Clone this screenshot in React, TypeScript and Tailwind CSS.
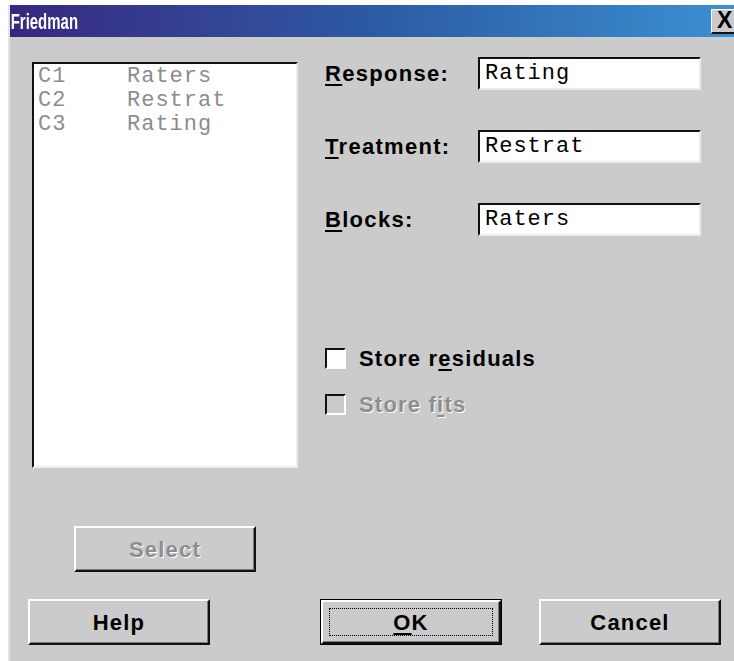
import type { ReactNode } from "react";

const sans = "font-['Liberation_Sans',Arial,sans-serif]";
const mono = "font-['Liberation_Mono','Courier_New',monospace]";

const columns = [
  { id: "C1", name: "Raters" },
  { id: "C2", name: "Restrat" },
  { id: "C3", name: "Rating" },
];

function Underline({ children }: { children: ReactNode }) {
  return <span className="underline underline-offset-[3px] decoration-[2px]">{children}</span>;
}

function Field({ label, value }: { label: ReactNode; value: string }) {
  return (
    <div className="flex items-center h-[33px]">
      <div className={`${sans} w-[153px] text-[22px] font-bold tracking-[1.3px] text-black`}>{label}</div>
      <div className="w-[223px] h-[33px] bg-white border-t-2 border-l-2 border-t-[#111] border-l-[#111] border-r-2 border-b-2 border-r-[#ececec] border-b-[#ececec] flex items-center pl-[5px]">
        <span className={`${mono} text-[22px] tracking-[1px] text-black leading-none`}>{value}</span>
      </div>
    </div>
  );
}

function Check({ label, disabled }: { label: ReactNode; disabled?: boolean }) {
  return (
    <div className="flex items-center h-[21px]">
      <div
        className={`w-[21px] h-[21px] border-t-2 border-l-2 border-t-[#111] border-l-[#111] border-r-2 border-b-2 border-r-white border-b-white ${
          disabled ? "bg-[#cbcbcb]" : "bg-white"
        }`}
      />
      <span
        className={`${sans} ml-[13px] text-[22px] font-bold tracking-[1.2px] ${
          disabled ? "text-[#8e8e8e] [text-shadow:1px_1px_0_#fff]" : "text-black"
        }`}
      >
        {label}
      </span>
    </div>
  );
}

function Button({
  children,
  disabled,
  focused,
  className = "",
}: {
  children: ReactNode;
  disabled?: boolean;
  focused?: boolean;
  className?: string;
}) {
  return (
    <div className={`w-[182px] h-[46px] bg-[#cbcbcb] ${focused ? "border border-black" : ""} ${className}`}>
      <div className="w-full h-full border-t-2 border-l-2 border-t-white border-l-white border-r-2 border-b-2 border-r-[#111] border-b-[#111] shadow-[inset_-1px_-1px_0_#7a7a7a] flex items-center justify-center">
        <div
          className={`flex items-center justify-center ${
            focused ? "w-[calc(100%-12px)] h-[calc(100%-12px)] border border-dotted border-black" : ""
          }`}
        >
          <span
            className={`${sans} text-[22px] font-bold tracking-[1.2px] ${
              disabled ? "text-[#8e8e8e] [text-shadow:1px_1px_0_#fff]" : "text-black"
            }`}
          >
            {children}
          </span>
        </div>
      </div>
    </div>
  );
}

export default function App() {
  return (
    <div className="min-h-[661px] bg-white pl-[8px] pt-[5px] overflow-hidden">
      <div className="bg-[#cbcbcb] border-l-2 border-[#e4e4e4] min-h-[656px]">
        {/* title bar */}
        <div className="h-[32px] flex items-center justify-between bg-gradient-to-r from-[#362780] via-[#2b5aa4] to-[#3c90d2]">
          <span className={`${sans} pl-[1px] text-[22px] font-bold text-white scale-x-[0.68] origin-left`}>
            Friedman
          </span>
          <div className="w-[23px] h-[25px] bg-[#cbcbcb] border-t border-l border-white border-b-2 border-b-[#111] flex items-center pl-[5px]">
            <span className={`${sans} text-[23px] font-bold text-black leading-none`}>X</span>
          </div>
        </div>

        <div className="flex items-start">
          {/* variable list */}
          <div className="ml-[22px] mt-[25px] w-[266px]">
            <div className="h-[406px] bg-white border-t-2 border-l-2 border-t-[#111] border-l-[#111] border-r-2 border-b-2 border-r-[#ececec] border-b-[#ececec] pl-[4px]">
              {columns.map((c) => (
                <div key={c.id} className={`${mono} flex h-[24px] items-center text-[22px] tracking-[1px] text-[#8c8c8c]`}>
                  <span className="w-[89px]">{c.id}</span>
                  <span>{c.name}</span>
                </div>
              ))}
            </div>
            <Button disabled className="ml-[42px] mt-[58px]">
              Select
            </Button>
          </div>

          {/* options */}
          <div className="ml-[27px] mt-[20px] flex flex-col">
            <div className="flex flex-col gap-[40px]">
              <Field label={<><Underline>R</Underline>esponse:</>} value="Rating" />
              <Field label={<><Underline>T</Underline>reatment:</>} value="Restrat" />
              <Field label={<><Underline>B</Underline>locks:</>} value="Raters" />
            </div>
            <div className="mt-[112px] flex flex-col gap-[25px]">
              <Check label={<>Store r<Underline>e</Underline>siduals</>} />
              <Check disabled label={<>Store f<Underline>i</Underline>ts</>} />
            </div>
          </div>
        </div>

        {/* dialog buttons */}
        <div className="flex ml-[18px] mt-[27px]">
          <Button>Help</Button>
          <Button focused className="ml-[110px]">
            <Underline>O</Underline>K
          </Button>
          <Button className="ml-[37px]">Cancel</Button>
        </div>
      </div>
    </div>
  );
}
